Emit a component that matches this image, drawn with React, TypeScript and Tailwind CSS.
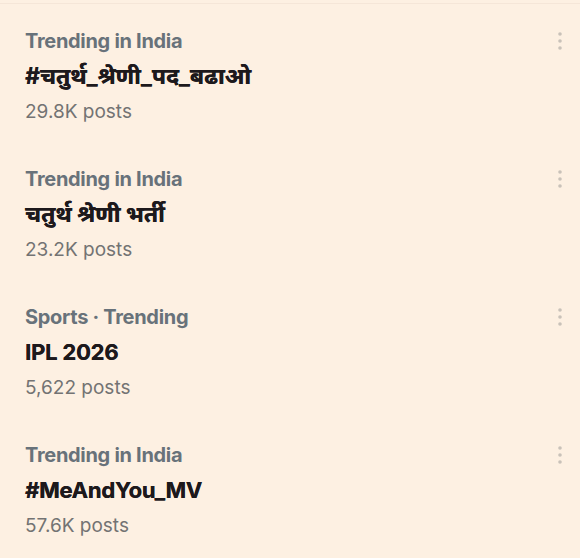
import React from "react";

const items = [
  { cat: "Trending in India", title: "#चतुर्थ_श्रेणी_पद_बढाओ", posts: "29.8K posts", hi: true },
  { cat: "Trending in India", title: "चतुर्थ श्रेणी भर्ती", posts: "23.2K posts", hi: true },
  { cat: "Sports · Trending", title: "IPL 2026", posts: "5,622 posts", hi: false },
  { cat: "Trending in India", title: "#MeAndYou_MV", posts: "57.6K posts", hi: false },
];

function Dots() {
  return (
    <svg width="6" height="20" viewBox="0 0 6 20" className="block">
      <circle cx="3" cy="3" r="1.8" fill="#c9c1b9" />
      <circle cx="3" cy="10" r="1.8" fill="#c9c1b9" />
      <circle cx="3" cy="17" r="1.8" fill="#c9c1b9" />
    </svg>
  );
}

export default function App() {
  return (
    <div
      className="w-[580px] h-[558px] bg-[#fdf0e2] overflow-hidden"
      style={{ fontFamily: "Inter, 'Noto Sans', 'Noto Sans Devanagari', 'Lohit Devanagari', sans-serif" }}
    >
      <div className="h-[3px]" />
      <div className="border-t border-[#f5e6d8]" />
      {items.map((it, i) => (
        <div key={i} className="flex h-[138px] pl-[25px] pr-[16px] pt-[20px]">
          <div className="flex-1 flex flex-col">
            <div className="text-[20px] leading-[35px] font-bold text-[#68727a] tracking-[-0.3px]">{it.cat}</div>
            <div
              className={
                it.hi
                  ? "text-[23px] leading-[35px] font-bold text-[#1d191c] [text-shadow:0.3px_0_0_#1d191c]"
                  : "text-[22px] leading-[35px] font-bold text-[#1d191c] tracking-[-0.2px] [text-shadow:0.3px_0_0_#1d191c]"
              }
            >
              {it.title}
            </div>
            <div className="text-[19px] leading-[35px] font-normal text-[#737373]">{it.posts}</div>
          </div>
          <div className="pt-[7px] pr-[1px]">
            <Dots />
          </div>
        </div>
      ))}
    </div>
  );
}
